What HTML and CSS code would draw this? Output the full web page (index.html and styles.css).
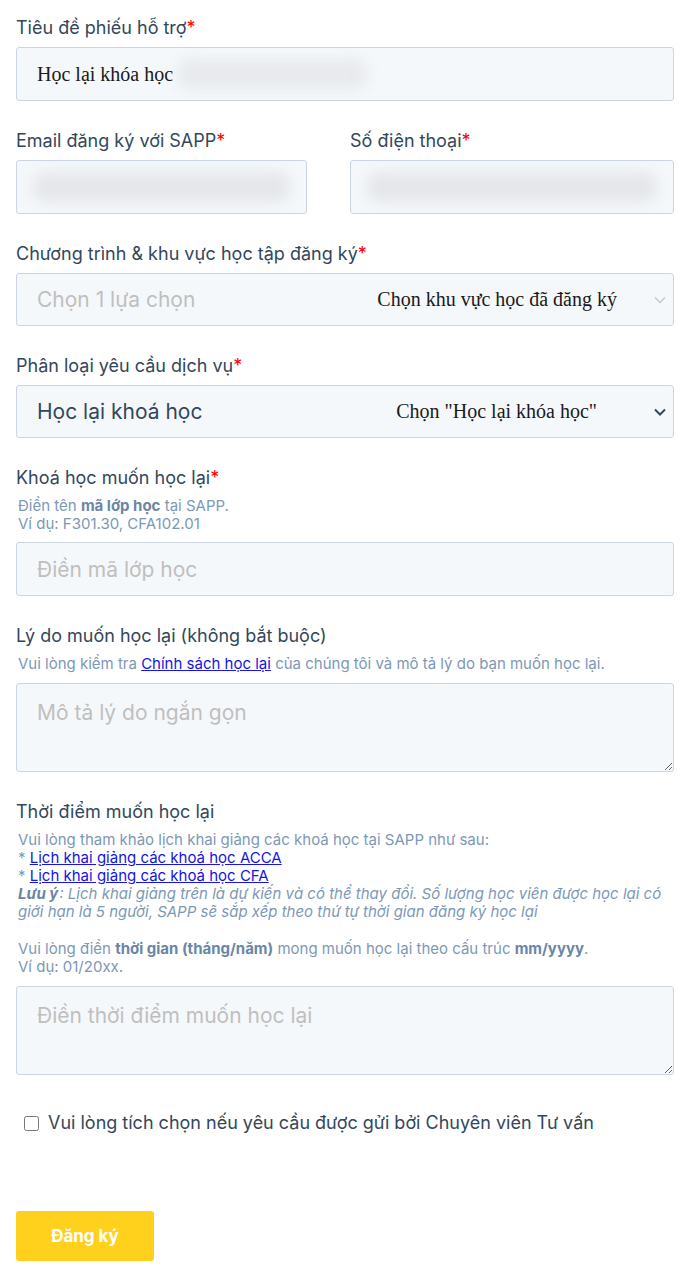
FILE: index.html
```html
<!DOCTYPE html>
<html lang="vi">
<head>
<meta charset="utf-8">
<title>Học lại khóa học</title>
<link rel="stylesheet" href="styles.css">
</head>
<body>
<form class="form">
  <div class="field">
    <label class="label">Tiêu đề phiếu hỗ trợ<span class="req">*</span></label>
    <div class="box">
      <span class="note">Học lại khóa học</span>
      <span class="smudge smudge-title"></span>
    </div>
  </div>

  <div class="row">
    <div class="field col-email">
      <label class="label">Email đăng ký với SAPP<span class="req">*</span></label>
      <div class="box"><span class="smudge smudge-full"></span></div>
    </div>
    <div class="field col-phone">
      <label class="label">Số điện thoại<span class="req">*</span></label>
      <div class="box"><span class="smudge smudge-full"></span></div>
    </div>
  </div>

  <div class="field">
    <label class="label">Chương trình &amp; khu vực học tập đăng ký<span class="req">*</span></label>
    <div class="box select">
      <span class="placeholder">Chọn 1 lựa chọn</span>
      <span class="note note-select1">Chọn khu vực học đã đăng ký</span>
      <svg class="chev chev-light" width="12" height="8" viewBox="0 0 12 8"><polyline points="1,1.5 6,6.5 11,1.5" fill="none" stroke="currentColor" stroke-width="1.4"/></svg>
    </div>
  </div>

  <div class="field">
    <label class="label">Phân loại yêu cầu dịch vụ<span class="req">*</span></label>
    <div class="box select">
      <span class="value">Học lại khoá học</span>
      <span class="note note-select2">Chọn "Học lại khóa học"</span>
      <svg class="chev" width="12" height="8" viewBox="0 0 12 8"><polyline points="1,1.5 6,6.5 11,1.5" fill="none" stroke="currentColor" stroke-width="2"/></svg>
    </div>
  </div>

  <div class="field">
    <label class="label">Khoá học muốn học lại<span class="req">*</span></label>
    <div class="help">Điền tên <b>mã lớp học</b> tại SAPP.<br>Ví dụ: F301.30, CFA102.01</div>
    <div class="box"><span class="placeholder">Điền mã lớp học</span></div>
  </div>

  <div class="field">
    <label class="label">Lý do muốn học lại (không bắt buộc)</label>
    <div class="help">Vui lòng kiểm tra <a href="#">Chính sách học lại</a> của chúng tôi và mô tả lý do bạn muốn học lại.</div>
    <textarea class="area" placeholder="Mô tả lý do ngắn gọn"></textarea>
  </div>

  <div class="field">
    <label class="label">Thời điểm muốn học lại</label>
    <div class="help help-long">Vui lòng tham khảo lịch khai giảng các khoá học tại SAPP như sau:<br>* <a href="#">Lịch khai giảng các khoá học ACCA</a><br>* <a href="#">Lịch khai giảng các khoá học CFA</a><br><i><b class="note-key">Lưu ý</b>: Lịch khai giảng trên là dự kiến và có thể thay đổi. Số lượng học viên được học lại có giới hạn là 5 người, SAPP sẽ sắp xếp theo thứ tự thời gian đăng ký học lại</i><br><br>Vui lòng điền <b>thời gian (tháng/năm)</b> mong muốn học lại theo cấu trúc <b>mm/yyyy</b>.<br>Ví dụ: 01/20xx.</div>
    <textarea class="area" placeholder="Điền thời điểm muốn học lại"></textarea>
  </div>

  <label class="check">
    <input type="checkbox" class="check-box">
    <span>Vui lòng tích chọn nếu yêu cầu được gửi bởi Chuyên viên Tư vấn</span>
  </label>

  <button type="button" class="submit">Đăng ký</button>
</form>
</body>
</html>
```

FILE: styles.css
```css
* { box-sizing: border-box; }

html, body {
  margin: 0;
  padding: 0;
  background: #ffffff;
}

body {
  font-family: Inter, "Noto Sans", "Liberation Sans", sans-serif;
  color: #33475b;
}

.form {
  width: 658px;
  margin-left: 16px;
  padding-top: 17px;
  display: flex;
  flex-direction: column;
}

.field {
  display: flex;
  flex-direction: column;
  margin-bottom: 29px;
}

.row {
  display: flex;
  justify-content: space-between;
}

.col-email { width: 291px; }
.col-phone { width: 324px; }

.label {
  font-size: 18px;
  line-height: 22px;
  margin-bottom: 8px;
  color: #33475b;
}

.req { color: #ff0000; }

.box {
  height: 54px;
  background: #f5f8fa;
  border: 1px solid #cbd6e2;
  border-radius: 3px;
  display: flex;
  align-items: center;
  padding: 0 20px;
  position: relative;
  overflow: hidden;
}

.select { height: 53px; }

.note {
  font-family: "Liberation Serif", "Times New Roman", serif;
  font-size: 20px;
  color: #1a1a1a;
  position: relative;
  z-index: 1;
}

.smudge {
  display: block;
  height: 30px;
  background: #e4e6e9;
  border-radius: 12px;
  filter: blur(7px);
}

.smudge-title {
  width: 190px;
  margin-left: 4px;
  opacity: 0.8;
}

.smudge-full {
  flex: 1;
  margin: 0 -4px;
}

.placeholder {
  font-size: 21px;
  color: #bfbfbf;
}

.value {
  font-size: 21px;
  color: #33475b;
}

.note-select1 { margin-left: auto; margin-right: 36px; }
.note-select2 { margin-left: auto; margin-right: 56px; }

.chev {
  position: absolute;
  right: 7px;
  top: 22px;
  color: #33475b;
}
.chev-light { color: #c2c8cf; }

.help {
  font-size: 15px;
  line-height: 18.2px;
  color: #7c98b6;
  padding-left: 2px;
  margin-top: 0;
  margin-bottom: 9px;
}

.help b { font-weight: 700; color: #6a86a6; }

.help .note-key { margin-right: 1px; }

.help-long { margin-bottom: 10px; }

.help a {
  color: #1414e6;
  text-decoration: underline;
}

.area {
  height: 89px;
  width: 100%;
  background: #f5f8fa;
  border: 1px solid #cbd6e2;
  border-radius: 3px;
  padding: 16px 20px;
  font-family: Inter, "Noto Sans", "Liberation Sans", sans-serif;
  font-size: 21px;
  color: #33475b;
  resize: vertical;
  display: block;
}

.area::placeholder { color: #bfbfbf; }

.check {
  display: flex;
  align-items: center;
  padding-left: 8px;
  margin-top: 8px;
  font-size: 18px;
  line-height: 22px;
  color: #33475b;
}

.check-box {
  width: 15px;
  height: 15px;
  margin: 0 9px 0 0;
}

.submit {
  margin-top: 77px;
  width: 138px;
  height: 50px;
  background: #ffd11c;
  color: #ffffff;
  border: 0;
  border-radius: 3px;
  font-family: Inter, "Noto Sans", "Liberation Sans", sans-serif;
  font-size: 17px;
  font-weight: 700;
}
```
